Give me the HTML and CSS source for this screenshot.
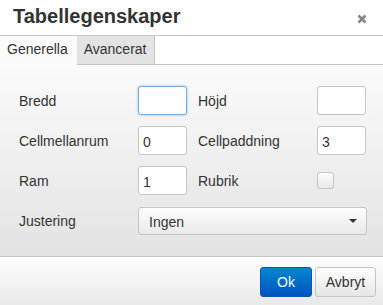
FILE: index.html
```html
<!DOCTYPE html>
<html lang="sv">
<head>
  <meta charset="UTF-8" />
  <title>Tabellegenskaper</title>
  <link rel="stylesheet" href="styles.css">
</head>
<body>
<div class="window">
  <div class="head">
    <div class="title">Tabellegenskaper</div>
    <svg class="close" width="10" height="10" viewBox="0 0 10 10">
      <path d="M1.5 1.5 L8.5 8.5 M8.5 1.5 L1.5 8.5" stroke="#858585" stroke-width="2.6" stroke-linecap="butt"/>
    </svg>
  </div>
  <div class="tabs">
    <div class="tab active">Generella</div>
    <div class="tab">Avancerat</div>
    <div class="tab-rest"></div>
  </div>
  <div class="body">
    <div class="row">
      <label class="label">Bredd</label>
      <input class="input focus" value="">
      <label class="label">Höjd</label>
      <input class="input" value="">
    </div>
    <div class="row">
      <label class="label">Cellmellanrum</label>
      <input class="input" value="0">
      <label class="label">Cellpaddning</label>
      <input class="input" value="3">
    </div>
    <div class="row">
      <label class="label">Ram</label>
      <input class="input" value="1">
      <label class="label">Rubrik</label>
      <div class="check-cell"><span class="checkbox"></span></div>
    </div>
    <div class="row row-select">
      <label class="label">Justering</label>
      <div class="select">
        <span>Ingen</span>
        <span class="caret"></span>
      </div>
    </div>
  </div>
  <div class="foot">
    <button class="btn primary">Ok</button>
    <button class="btn">Avbryt</button>
  </div>
</div>
</body>
</html>
```
FILE: styles.css
```css
* { box-sizing: border-box; }
html, body { margin:0; padding:0; background:#fff; }
body { font-family:"Liberation Sans", Arial, sans-serif; color:#333; font-size:14px; }
.window { width:383px; height:305px; display:flex; flex-direction:column; overflow:hidden; }

.head { height:36px; display:flex; align-items:center; justify-content:space-between; padding:0 16px 0 13px; border-bottom:1px solid #c5c5c5; background:#fff; }
.title { font-size:20px; font-weight:bold; color:#333; margin-top:-2px; }
.close { margin-top:2px; }

.tabs { height:29px; display:flex; background:#fff; }
.tab { height:29px; line-height:27px; padding:0 8px 0 7px; border-bottom:1px solid #c5c5c5; border-right:1px solid #c5c5c5; background:#e3e3e3; }
.tab.active { background:#fbfbfb; border-bottom-color:#fbfbfb; border-right:none; padding-right:9px; }
.tab-rest { flex:1; border-bottom:1px solid #c5c5c5; }

.body { height:191px; padding:21px 17px 0 19px; background:linear-gradient(to bottom, #fbfbfb, #e3e3e3); display:flex; flex-direction:column; gap:11px; }
.row { display:grid; grid-template-columns:119px 49px 11px 119px 49px; align-items:center; height:29px; }
.row .label:nth-of-type(2) { grid-column:4; }
.row .input:nth-of-type(2), .row .check-cell { grid-column:5; }
.label { font-size:14px; color:#333; }
.input { width:49px; height:29px; border:1px solid #c5c5c5; border-radius:3px; background:#fff; font:14px "Liberation Sans", Arial, sans-serif; color:#333; padding:3px 0 0 4px; outline:none; }
.input.focus { border-color:#6aaee8; box-shadow:0 0 3px rgba(89,165,229,.6); }
.check-cell { height:29px; display:flex; align-items:center; }
.checkbox { width:17px; height:17px; border:1px solid #c5c5c5; border-radius:3px; background:linear-gradient(to bottom, #fdfdfd, #e8e8e8); }

.row-select { margin-top:1px; grid-template-columns:119px 229px; height:28px; }
.select { grid-column:2; height:28px; border:1px solid #c5c5c5; border-radius:3px; background:linear-gradient(to bottom, #fefefe, #e9e9e9); display:flex; align-items:center; justify-content:space-between; padding:1px 9px 0 10px; }
.caret { width:0; height:0; border-left:4px solid transparent; border-right:4px solid transparent; border-top:4px solid #333; margin-top:-2px; }

.foot { flex:1; border-top:1px solid #c5c5c5; background:linear-gradient(to bottom, #fefefe, #e9e9e9); display:flex; justify-content:flex-end; align-items:flex-start; gap:3px; padding:10px 7px 0 0; }
.btn { height:30px; border:1px solid #c5c5c5; border-radius:3px; background:linear-gradient(to bottom, #ffffff, #e6e6e6); font:14px "Liberation Sans", Arial, sans-serif; color:#333; padding:0 7px; width:61px; }
.btn.primary { width:52px; background:linear-gradient(to bottom, #0088cc, #0053c4); border-color:#0b57ad; color:#fff; }
```
